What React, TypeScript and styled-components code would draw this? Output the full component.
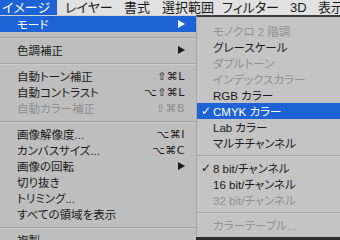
import styled, { createGlobalStyle } from 'styled-components';

const GlobalStyle = createGlobalStyle`
    body {
        margin: 0;
        background: #bdbdbd;
        overflow: hidden;
    }
`;

const FONT = `'Liberation Sans', 'Noto Sans CJK JP', sans-serif`;
const BLUE = '#1d63d5';

type Entry =
    | { kind: 'sep' }
    | {
          kind?: 'item';
          label: string;
          shortcut?: string;
          submenu?: boolean;
          disabled?: boolean;
          active?: boolean;
          checked?: boolean;
      };

const titles = [
    { label: 'イメージ', width: 57 },
    { label: 'レイヤー', width: 59 },
    { label: '書式', width: 38 },
    { label: '選択範囲', width: 58 },
    { label: 'フィルター', width: 68 },
    { label: '3D', width: 28 },
    { label: '表示', width: 40 },
];

const mainItems: Entry[] = [
    { label: 'モード', submenu: true, active: true },
    { kind: 'sep' },
    { label: '色調補正', submenu: true },
    { kind: 'sep' },
    { label: '自動トーン補正', shortcut: '⇧⌘L' },
    { label: '自動コントラスト', shortcut: '⌥⇧⌘L' },
    { label: '自動カラー補正', shortcut: '⇧⌘B', disabled: true },
    { kind: 'sep' },
    { label: '画像解像度...', shortcut: '⌥⌘I' },
    { label: 'カンバスサイズ...', shortcut: '⌥⌘C' },
    { label: '画像の回転', submenu: true },
    { label: '切り抜き' },
    { label: 'トリミング...' },
    { label: 'すべての領域を表示' },
    { kind: 'sep' },
    { label: '複製...' },
];

const modeItems: Entry[] = [
    { label: 'モノクロ 2 階調', disabled: true },
    { label: 'グレースケール' },
    { label: 'ダブルトーン', disabled: true },
    { label: 'インデックスカラー', disabled: true },
    { label: 'RGB カラー' },
    { label: 'CMYK カラー', checked: true, active: true },
    { label: 'Lab カラー' },
    { label: 'マルチチャンネル' },
    { kind: 'sep' },
    { label: '8 bit/チャンネル', checked: true },
    { label: '16 bit/チャンネル' },
    { label: '32 bit/チャンネル', disabled: true },
    { kind: 'sep' },
    { label: 'カラーテーブル...', disabled: true },
];

function Arrow() {
    return (
        <svg width="7" height="8" viewBox="0 0 7 8">
            <polygon points="0,0 7,4 0,8" fill="currentColor" />
        </svg>
    );
}

export default function App() {
    return (
        <Screen>
            <GlobalStyle />
            <MenuBar>
                {titles.map((t, i) => (
                    <MenuTitle key={t.label} $active={i === 0} $width={t.width}>
                        {t.label}
                    </MenuTitle>
                ))}
            </MenuBar>
            <MenuLayer>
                <MainMenu>
                    {mainItems.map((item, i) =>
                        item.kind === 'sep' ? (
                            <Separator key={i} />
                        ) : (
                            <MainRow
                                key={i}
                                $active={item.active}
                                $disabled={item.disabled}
                            >
                                <span>{item.label}</span>
                                {item.submenu && <Arrow />}
                                {item.shortcut && (
                                    <Shortcut>{item.shortcut}</Shortcut>
                                )}
                            </MainRow>
                        )
                    )}
                </MainMenu>
                <SubMenu>
                    {modeItems.map((item, i) =>
                        item.kind === 'sep' ? (
                            <SubSeparator key={i} />
                        ) : (
                            <SubRow
                                key={i}
                                $active={item.active}
                                $disabled={item.disabled}
                            >
                                <Check>{item.checked ? '✓' : ''}</Check>
                                <span>{item.label}</span>
                            </SubRow>
                        )
                    )}
                </SubMenu>
            </MenuLayer>
        </Screen>
    );
}

const Screen = styled.div`
    width: 340px;
    height: 240px;
    overflow: hidden;
    font-family: ${FONT};
    font-feature-settings: 'palt';
    color: #1b1b1b;
`;

const MenuBar = styled.div`
    display: flex;
    height: 15px;
    background: #e1e1e1;
    border-bottom: 1px solid #d0d0d0;
`;

const MenuTitle = styled.div<{ $active?: boolean; $width: number }>`
    flex: 0 0 ${(p) => p.$width}px;
    box-sizing: border-box;
    white-space: nowrap;
    display: flex;
    align-items: center;
    padding-left: 8px;
    font-size: 13px;
    line-height: 15px;
    color: ${(p) => (p.$active ? '#ffffff' : '#1b1b1b')};
    background: ${(p) => (p.$active ? BLUE : 'transparent')};

    &:first-child {
        padding-left: 2px;
    }
`;

const MenuLayer = styled.div`
    position: relative;
    height: 224px;
`;

const MainMenu = styled.div`
    width: 200px;
    height: 100%;
    background: #bebebe;
`;

const MainRow = styled.div<{ $active?: boolean; $disabled?: boolean }>`
    display: flex;
    align-items: center;
    justify-content: space-between;
    height: 16px;
    padding: 0 15px 0 17px;
    font-size: 11.5px;
    white-space: nowrap;
    color: ${(p) =>
        p.$active ? '#ffffff' : p.$disabled ? '#8e8e8e' : '#1b1b1b'};
    background: ${(p) => (p.$active ? BLUE : 'transparent')};
`;

const Shortcut = styled.span`
    font-family: 'DejaVu Sans', 'Liberation Sans', sans-serif;
    font-size: 11px;
    letter-spacing: 0.5px;
`;

const Separator = styled.div`
    height: 10px;
    display: flex;
    align-items: center;

    &::after {
        content: '';
        flex: 1;
        height: 1px;
        background: #a6a6a6;
        box-shadow: 0 1px 0 #cacaca;
    }
`;

const SubMenu = styled.div`
    position: absolute;
    left: 196px;
    top: -1px;
    width: 160px;
    padding: 6px 0 4px;
    background: #c4c4c4;
    border-top: 2px solid #3d3d3d;
    border-left: 1px solid #a9a9a9;
    box-shadow: 0 3px 0 #2e2e2e;
`;

const SubRow = styled.div<{ $active?: boolean; $disabled?: boolean }>`
    display: flex;
    align-items: center;
    height: 16px;
    padding-left: 4px;
    font-size: 11.5px;
    white-space: nowrap;
    color: ${(p) =>
        p.$active ? '#ffffff' : p.$disabled ? '#929292' : '#1b1b1b'};
    background: ${(p) => (p.$active ? BLUE : 'transparent')};
`;

const Check = styled.span`
    width: 12px;
    font-family: 'DejaVu Sans', sans-serif;
    font-size: 12px;
    font-weight: bold;
`;

const SubSeparator = styled(Separator)`
    height: 9px;
`;
